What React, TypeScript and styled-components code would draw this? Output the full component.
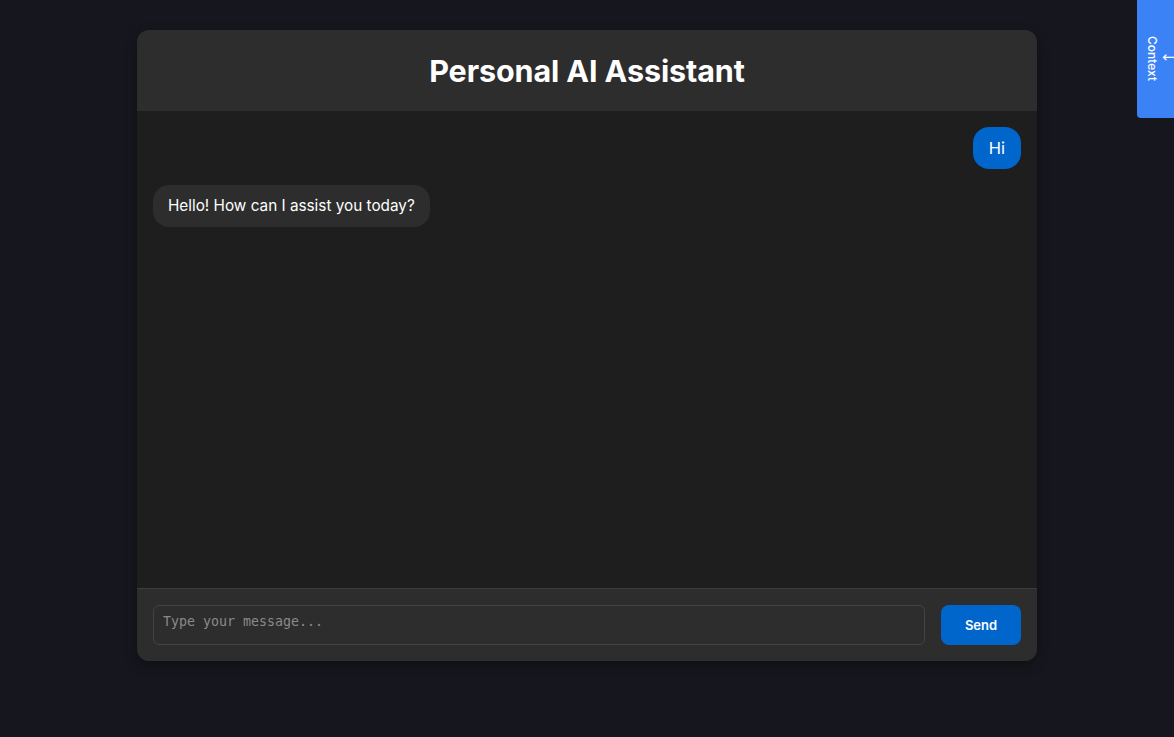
import styled, { createGlobalStyle } from 'styled-components';
import { useState } from 'react';

interface Message {
  role: 'user' | 'assistant';
  text: string;
}

const messages: Message[] = [
  { role: 'user', text: 'Hi' },
  { role: 'assistant', text: 'Hello! How can I assist you today?' },
];

function App() {
  const [draft, setDraft] = useState('');

  return (
    <>
      <GlobalStyle />
      <Page>
        <ChatWindow>
          <Header>
            <Title>Personal AI Assistant</Title>
          </Header>
          <MessageList>
            {messages.map((m, i) => (
              <Bubble key={i} $user={m.role === 'user'}>
                {m.text}
              </Bubble>
            ))}
          </MessageList>
          <Footer>
            <MessageInput
              placeholder="Type your message..."
              value={draft}
              onChange={(e) => setDraft(e.target.value)}
            />
            <SendButton>Send</SendButton>
          </Footer>
        </ChatWindow>
      </Page>
      <ContextTab>
        <TabLabel>Context</TabLabel>
        <TabArrow>←</TabArrow>
      </ContextTab>
    </>
  );
}

const GlobalStyle = createGlobalStyle`
  html, body {
    margin: 0;
    padding: 0;
    background: #16161e;
    font-family: Inter, "Noto Sans", sans-serif;
  }
`;

const Page = styled.div`
  min-height: 737px;
  display: flex;
  justify-content: center;
  padding-top: 30px;
  box-sizing: border-box;
`;

const ChatWindow = styled.div`
  width: 900px;
  height: 631px;
  display: flex;
  flex-direction: column;
  background: #1e1e1e;
  border-radius: 12px;
  overflow: hidden;
  box-shadow: 0 4px 12px rgba(0, 0, 0, 0.35);
`;

const Header = styled.div`
  height: 81px;
  flex-shrink: 0;
  background: #2d2d2d;
  display: flex;
  align-items: center;
  justify-content: center;
`;

const Title = styled.h1`
  margin: 0;
  color: #ffffff;
  font-size: 30.5px;
  font-weight: 700;
  letter-spacing: -0.1px;
`;

const MessageList = styled.div`
  flex: 1;
  display: flex;
  flex-direction: column;
  gap: 16px;
  padding: 16px;
`;

const Bubble = styled.div<{ $user: boolean }>`
  align-self: ${(p) => (p.$user ? 'flex-end' : 'flex-start')};
  background: ${(p) => (p.$user ? '#0066cc' : '#2d2d2d')};
  color: #ffffff;
  font-size: ${(p) => (p.$user ? '16.5px' : '15.3px')};
  line-height: 22px;
  padding: ${(p) => (p.$user ? '10px 16px' : '10px 15px')};
  border-radius: 16px;
`;

const Footer = styled.div`
  flex-shrink: 0;
  display: flex;
  gap: 16px;
  padding: 16px;
  background: #2d2d2d;
  border-top: 1px solid #3c3c3c;
`;

const MessageInput = styled.textarea`
  flex: 1;
  height: 40px;
  box-sizing: border-box;
  resize: none;
  padding: 8px 9px;
  background: #2d2d2d;
  color: #ffffff;
  border: 1px solid #444444;
  border-radius: 6px;
  font-family: "DejaVu Sans Mono", monospace;
  font-size: 13.3px;
  outline: none;

  &::placeholder {
    color: #8a8a8a;
  }
`;

const SendButton = styled.button`
  width: 80px;
  height: 40px;
  border: none;
  border-radius: 8px;
  background: #0066cc;
  color: #ffffff;
  font-family: Inter, sans-serif;
  font-size: 13px;
  font-weight: 600;
  cursor: pointer;
`;

const ContextTab = styled.button`
  position: fixed;
  top: 0;
  right: 0;
  width: 37px;
  height: 118px;
  border: none;
  padding: 0 0 0 8px;
  border-radius: 0 0 0 4px;
  background: #3b82f6;
  color: #ffffff;
  display: flex;
  align-items: center;
  justify-content: flex-start;
  gap: 2px;
  overflow: hidden;
  cursor: pointer;
`;

const TabArrow = styled.span`
  flex-shrink: 0;
  font-family: "DejaVu Sans", sans-serif;
  font-size: 15px;
  line-height: 1;
  margin-top: -4px;
`;

const TabLabel = styled.span`
  flex-shrink: 0;
  writing-mode: vertical-rl;
  font-family: Inter, sans-serif;
  font-size: 12px;
  font-weight: 500;
`;

export default App;
